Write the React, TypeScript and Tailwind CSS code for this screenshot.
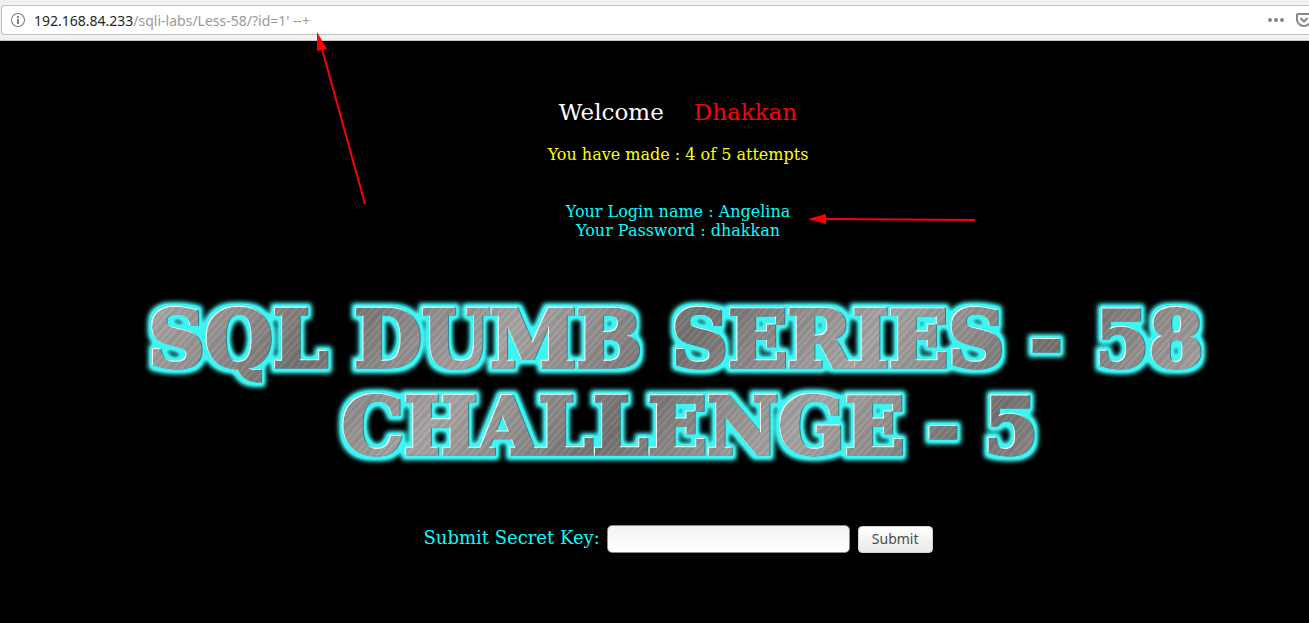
import React from "react";

function AddressBar() {
  return (
    <header className="relative h-[41px] border-b border-[#c9c6c2] bg-[#f2f1f0] pt-[5px] pl-px font-['Noto_Sans',sans-serif]">
      <div className="flex h-[30px] items-center rounded-l border border-r-0 border-[#c3bfbb] bg-white pl-2">
        <button type="button" aria-label="Site information" className="shrink-0">
          <svg viewBox="0 0 16 16" className="size-4" fill="none">
            <circle cx="8" cy="8" r="6.5" stroke="#808080" strokeWidth="1.1" />
            <rect x="7" y="7" width="2" height="5" fill="#808080" />
            <rect x="7" y="4" width="2" height="2" fill="#808080" />
          </svg>
        </button>
        <div className="ml-2 grow pt-px text-[14px] leading-5 whitespace-pre text-[#999]">
          <span className="text-[#1f1f1f]">192.168.84.233</span>/sqli-labs/Less-58/?id=1' --+
        </div>
        <button type="button" aria-label="Page actions" className="shrink-0">
          <svg viewBox="0 0 16 16" className="size-4" fill="#858585">
            <circle cx="2" cy="8" r="2" />
            <circle cx="8" cy="8" r="2" />
            <circle cx="14" cy="8" r="2" />
          </svg>
        </button>
        <div className="ml-3 w-[13px] shrink-0 overflow-hidden">
          <button type="button" aria-label="Save to Pocket" className="block w-4">
            <svg viewBox="0 0 16 16" className="size-4" fill="none" stroke="#858585" strokeWidth="2" strokeLinecap="round" strokeLinejoin="round">
              <path d="M2 2h12a1 1 0 0 1 1 1v4.500a7 6.500 0 0 1-14 0V3a1 1 0 0 1 1-1z" />
              <path d="M5 6.500l3 3 3-3" />
            </svg>
          </button>
        </div>
      </div>
      <svg viewBox="0 0 60 180" className="absolute top-[30px] left-[310px] z-10 h-[180px] w-[60px]">
        <path d="M12 19L55 174" stroke="#f00" strokeWidth="2" />
        <path d="M7 2L17 19 7 21z" fill="#f00" />
      </svg>
    </header>
  );
}

function Banner() {
  return (
    <svg viewBox="0 -20 1092 200" role="img" aria-label="SQL Dumb Series - 58, Challenge - 5" className="mt-[35px] w-full max-w-[1092px]">
      <defs>
        <linearGradient id="shade" x1="40" y1="0" x2="150" y2="90" gradientUnits="userSpaceOnUse" spreadMethod="reflect">
          <stop offset="0" stopColor="#a8a4a4" />
          <stop offset="0.5" stopColor="#928e8e" />
          <stop offset="1" stopColor="#757171" />
        </linearGradient>
        <filter id="metal" x="0" y="-20" width="1092" height="200" filterUnits="userSpaceOnUse" colorInterpolationFilters="sRGB">
          <feMorphology in="SourceAlpha" operator="dilate" radius="4" result="wide" />
          <feGaussianBlur in="wide" stdDeviation="2.500" result="soft" />
          <feComponentTransfer in="soft" result="halo">
            <feFuncA type="linear" slope="1.400" />
          </feComponentTransfer>
          <feFlood floodColor="#3ff5f3" />
          <feComposite in2="halo" operator="in" result="glow" />
          <feOffset in="SourceAlpha" dx="-1" dy="-1" result="up" />
          <feFlood floodColor="#ffffff" />
          <feComposite in2="up" operator="in" result="light" />
          <feOffset in="SourceAlpha" dx="1" dy="0" result="down" />
          <feFlood floodColor="#2c8285" />
          <feComposite in2="down" operator="in" result="dark" />
          <feMerge>
            <feMergeNode in="glow" />
            <feMergeNode in="dark" />
            <feMergeNode in="light" />
            <feMergeNode in="SourceGraphic" />
          </feMerge>
        </filter>
        <pattern id="brushed" width="1092" height="200" patternUnits="userSpaceOnUse">
          <rect width="1092" height="200" fill="url(#shade)" />
          <rect width="1092" height="200" fill="url(#scratch)" />
        </pattern>
        <pattern id="scratch" width="17" height="400" patternUnits="userSpaceOnUse" patternTransform="rotate(42)">
          <path d="M1 0v400M5 0v400M12 0v400" stroke="#fff" strokeOpacity="0.160" strokeWidth="0.700" />
          <path d="M3 0v400M8 0v400M10 0v400M15 0v400" stroke="#000" strokeOpacity="0.160" strokeWidth="0.700" />
        </pattern>
      </defs>
      <g filter="url(#metal)" fill="url(#brushed)" stroke="url(#brushed)" strokeWidth="3" textAnchor="middle" className="font-['DejaVu_Serif',serif] text-[78px] font-bold">
        <text x="106" y="72">SQL</text>
        <text x="366" y="72">DUMB</text>
        <text x="706" y="72">SERIES</text>
        <text x="914" y="72">-</text>
        <text x="1017" y="72">58</text>
        <text x="491" y="159">CHALLENGE</text>
        <text x="811" y="159">-</text>
        <text x="879" y="159">5</text>
      </g>
    </svg>
  );
}

export default function App() {
  return (
    <div className="min-h-screen bg-black">
      <AddressBar />
      <main className="flex flex-col items-center pt-[55px] pb-16 pl-[47px] font-['DejaVu_Serif',serif] text-[16px] leading-[19px] text-[#0ff]">
        <h1 className="flex gap-[30px] text-[23px] leading-8">
          <span className="text-white">Welcome</span>
          <span className="text-[#f00]">Dhakkan</span>
        </h1>
        <p className="mt-[17px] text-[#ff0]">You have made : 4 of 5 attempts</p>
        <div className="relative mt-[38px] text-center">
          <p>Your Login name : Angelina</p>
          <p>Your Password : dhakkan</p>
          <svg viewBox="0 0 170 12" className="absolute top-[11px] left-full ml-[18px] h-3 w-[170px]">
            <path d="M16 6L167 7" stroke="#f00" strokeWidth="2" />
            <path d="M0 6L18 1V11z" fill="#f00" />
          </svg>
        </div>
        <Banner />
        <form className="mt-[50px] flex items-center" onSubmit={(event) => event.preventDefault()}>
          <label htmlFor="secret-key" className="mr-[7px] pb-0.5 text-[18px] leading-6">Submit Secret Key:</label>
          <input
            id="secret-key"
            type="text"
            className="h-7 w-[243px] rounded-[5px] border border-[#8d8984] bg-linear-to-b from-[#f3f3f3] to-white px-2 text-[15px] text-black"
          />
          <button
            type="submit"
            className="ml-2 h-[27px] rounded border border-[#d6d2ce] bg-linear-to-b from-white to-[#eae8e6] px-[13px] font-['Noto_Sans',sans-serif] text-[14px] leading-5 text-[#4c4c4c]"
          >
            Submit
          </button>
        </form>
      </main>
    </div>
  );
}
